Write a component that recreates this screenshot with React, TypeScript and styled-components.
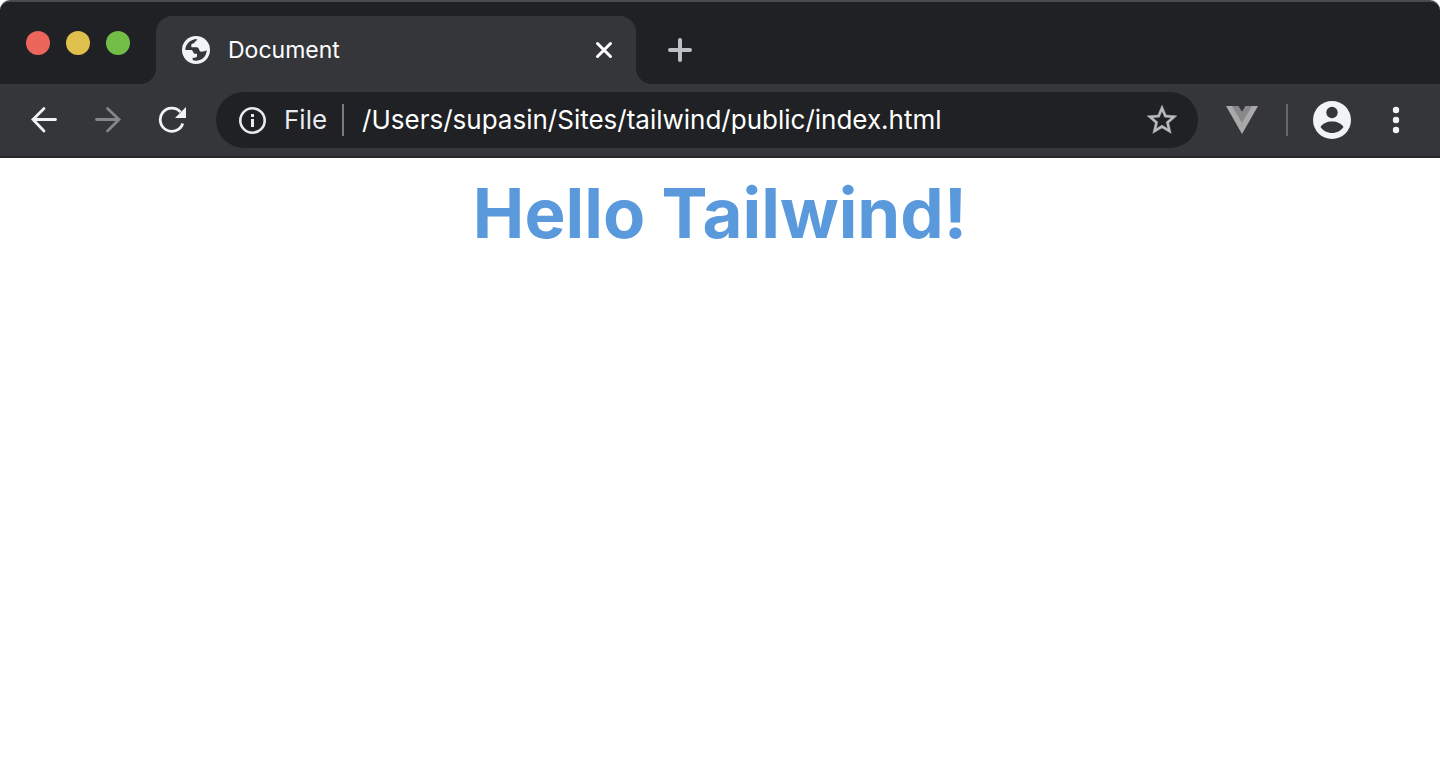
import React from "react";
import styled, { createGlobalStyle } from "styled-components";

const GlobalStyle = createGlobalStyle`
  *, *::before, *::after { box-sizing: border-box; }
  body {
    margin: 0;
    background: #ffffff;
    font-family: Inter, "Liberation Sans", sans-serif;
  }
`;

const Chrome = styled.header`
  background: #202124;
  border-top: 2px solid #4a4b4e;
  border-radius: 10px 10px 0 0;
`;

const TabStrip = styled.div`
  display: flex;
  height: 82px;
  padding: 14px 26px 0;
`;

const WindowControls = styled.div`
  display: flex;
  gap: 16px;
  width: 130px;
  padding-top: 15px;
`;

const Light = styled.button<{ $color: string }>`
  width: 24px;
  height: 24px;
  padding: 0;
  border: 0;
  border-radius: 50%;
  background: ${(p) => p.$color};
`;

const Tab = styled.div`
  position: relative;
  display: flex;
  align-items: center;
  width: 480px;
  height: 68px;
  padding: 0 20px 0 26px;
  border-radius: 16px 16px 0 0;
  background: #35363a;
  color: #ffffff;

  &::before,
  &::after {
    content: "";
    position: absolute;
    bottom: 0;
    width: 16px;
    height: 16px;
  }
  &::before {
    right: 100%;
    background: radial-gradient(circle at 0 0, transparent 16px, #35363a 16px);
  }
  &::after {
    left: 100%;
    background: radial-gradient(circle at 100% 0, transparent 16px, #35363a 16px);
  }
`;

const TabTitle = styled.span`
  flex: 1;
  margin-left: 18px;
  font-size: 23px;
  line-height: 32px;
`;

const IconButton = styled.button<{ $size?: number; $color?: string }>`
  display: flex;
  flex: none;
  align-items: center;
  justify-content: center;
  width: ${(p) => p.$size ?? 48}px;
  height: ${(p) => p.$size ?? 48}px;
  padding: 0;
  border: 0;
  background: transparent;
  color: ${(p) => p.$color ?? "#f1f3f4"};
`;

const NewTab = styled.div`
  padding: 10px 20px;
`;

const Toolbar = styled.div`
  display: flex;
  align-items: center;
  height: 74px;
  padding: 0 20px;
  background: #35363a;
  border-bottom: 2px solid #28282b;
`;

const Navigation = styled.nav`
  display: flex;
  gap: 16px;
  margin-right: 20px;
`;

const AddressBar = styled.form`
  display: flex;
  flex: 1;
  align-items: center;
  min-width: 0;
  height: 56px;
  padding: 0 12px 0 22px;
  border-radius: 28px;
  background: #202124;
  color: #e8eaed;
  font-size: 26px;
  line-height: 32px;
`;

const Scheme = styled.span`
  margin: 0 15px 0 18px;
`;

const Divider = styled.span<{ $color: string }>`
  flex: none;
  width: 2px;
  height: 32px;
  background: ${(p) => p.$color};
`;

const Address = styled.input`
  flex: 1;
  min-width: 0;
  margin-left: 18px;
  padding: 0;
  border: 0;
  outline: 0;
  background: transparent;
  color: #ffffff;
  font: inherit;
`;

const Actions = styled.div`
  display: flex;
  align-items: center;
  margin-left: 20px;
`;

const ProfileGroup = styled.div`
  display: flex;
  gap: 16px;
  margin-left: 20px;
`;

const Page = styled.main`
  padding: 10px 0;
`;

const Title = styled.h1`
  margin: 0;
  color: #5a99db;
  font-size: 69px;
  font-weight: 700;
  line-height: 90px;
  text-align: center;
`;

const GlobeIcon = () => (
  <svg width="28" height="28" viewBox="0 0 84 84" aria-hidden="true">
    <circle cx="42" cy="42" r="42" fill="#f1f3f4" />
    <path
      d="M45 9C26 9 10 24 10 42H28C34 43 33 52 38 53H45V60C45 64 42 65 38 65H32V72C36 74 40 75 44 74C61 73 74 60 74 42C71 46 65 47 56 47C51 45 52 34 44 34H28V27C28 22 36 24 38 19C40 15 45 15 45 9Z"
      fill="#35363a"
    />
  </svg>
);

const CloseIcon = () => (
  <svg width="18" height="18" viewBox="0 0 18 18" fill="none" stroke="currentColor" strokeWidth="3" strokeLinecap="round" aria-hidden="true">
    <path d="M2.5 2.5L15.5 15.5M15.5 2.5L2.5 15.5" />
  </svg>
);

const PlusIcon = () => (
  <svg width="24" height="24" viewBox="0 0 24 24" fill="none" stroke="currentColor" strokeWidth="4" strokeLinecap="round" aria-hidden="true">
    <path d="M12 2V22M2 12H22" />
  </svg>
);

const ArrowIcon = ({ forward = false }: { forward?: boolean }) => (
  <svg width="28" height="28" viewBox="0 0 28 28" fill="none" stroke="currentColor" strokeWidth="2.8" strokeLinecap="round" aria-hidden="true">
    {forward ? <path d="M2.5 13.5H25M13.5 2.5L25 13.5L13.5 25" /> : <path d="M25.5 13.5H3M14 2.5L3 13.5L14 25" />}
  </svg>
);

const ReloadIcon = () => (
  <svg width="28" height="28" viewBox="0 0 28 28" fill="none" aria-hidden="true">
    <path d="M22.5 6A11.6 11.6 0 1 0 24.8 17.5" stroke="currentColor" strokeWidth="2.8" />
    <path d="M28 1V12H17Z" fill="currentColor" />
  </svg>
);

const InfoIcon = () => (
  <svg width="28" height="28" viewBox="0 0 28 28" fill="none" aria-hidden="true">
    <circle cx="14.5" cy="14.5" r="12.2" stroke="currentColor" strokeWidth="2.6" />
    <path d="M13 8h3v3h-3zM13 13h3v8h-3z" fill="currentColor" />
  </svg>
);

const StarIcon = () => (
  <svg width="36" height="36" viewBox="0 0 24 24" fill="currentColor" stroke="currentColor" strokeWidth="0.2" aria-hidden="true">
    <path d="M22 9.24l-7.19-.62L12 2 9.19 8.63 2 9.24l5.46 4.73L5.82 21 12 17.27 18.18 21l-1.63-7.03L22 9.24zM12 15.4l-3.76 2.27 1-4.28-3.32-2.88 4.38-.38L12 6.1l1.71 4.04 4.38.38-3.32 2.88 1 4.28L12 15.4z" />
  </svg>
);

const VueIcon = () => (
  <svg width="32" height="28" viewBox="0 0 32 28" aria-hidden="true">
    <path d="M0 0H12L16 6.5L20 0H32L16 28Z" fill="#a9a9a9" />
    <path d="M6 0H12.5L16 6L19.5 0H26L16 17Z" fill="#888888" />
  </svg>
);

const ProfileIcon = () => (
  <svg width="38" height="38" viewBox="0 0 38 38" aria-hidden="true">
    <circle cx="19" cy="19" r="19" fill="currentColor" />
    <circle cx="19" cy="11.5" r="5.7" fill="#35363a" />
    <path d="M7.5 26C9.5 22.5 14 20.5 19 20.5S28.5 22.5 30.5 26C28 29.7 23.7 32 19 32S10 29.7 7.5 26Z" fill="#35363a" />
  </svg>
);

const MenuIcon = () => (
  <svg width="8" height="28" viewBox="0 0 8 28" fill="currentColor" aria-hidden="true">
    <circle cx="4" cy="4" r="3.2" />
    <circle cx="4" cy="14" r="3.2" />
    <circle cx="4" cy="24" r="3.2" />
  </svg>
);

export default function App() {
  return (
    <>
      <GlobalStyle />
      <Chrome>
        <TabStrip>
          <WindowControls>
            <Light $color="#ed665c" aria-label="Close window" />
            <Light $color="#e0c04c" aria-label="Minimize window" />
            <Light $color="#72be47" aria-label="Zoom window" />
          </WindowControls>
          <Tab>
            <GlobeIcon />
            <TabTitle>Document</TabTitle>
            <IconButton $size={24} $color="#ffffff" aria-label="Close tab">
              <CloseIcon />
            </IconButton>
          </Tab>
          <NewTab>
            <IconButton $color="#bdc1c6" aria-label="New tab">
              <PlusIcon />
            </IconButton>
          </NewTab>
        </TabStrip>
        <Toolbar>
          <Navigation aria-label="History">
            <IconButton aria-label="Back">
              <ArrowIcon />
            </IconButton>
            <IconButton $color="#858689" aria-label="Forward">
              <ArrowIcon forward />
            </IconButton>
            <IconButton aria-label="Reload">
              <ReloadIcon />
            </IconButton>
          </Navigation>
          <AddressBar onSubmit={(e) => e.preventDefault()}>
            <InfoIcon />
            <Scheme>File</Scheme>
            <Divider $color="#7b7c7f" />
            <Address aria-label="Address" defaultValue="/Users/supasin/Sites/tailwind/public/index.html" />
            <IconButton type="button" $color="#b9babb" aria-label="Bookmark this page">
              <StarIcon />
            </IconButton>
          </AddressBar>
          <Actions>
            <IconButton aria-label="Vue devtools">
              <VueIcon />
            </IconButton>
            <ProfileGroup>
              <Divider $color="#67686c" />
            </ProfileGroup>
            <ProfileGroup>
              <IconButton aria-label="Profile">
                <ProfileIcon />
              </IconButton>
              <IconButton aria-label="Menu">
                <MenuIcon />
              </IconButton>
            </ProfileGroup>
          </Actions>
        </Toolbar>
      </Chrome>
      <Page>
        <Title>Hello Tailwind!</Title>
      </Page>
    </>
  );
}
